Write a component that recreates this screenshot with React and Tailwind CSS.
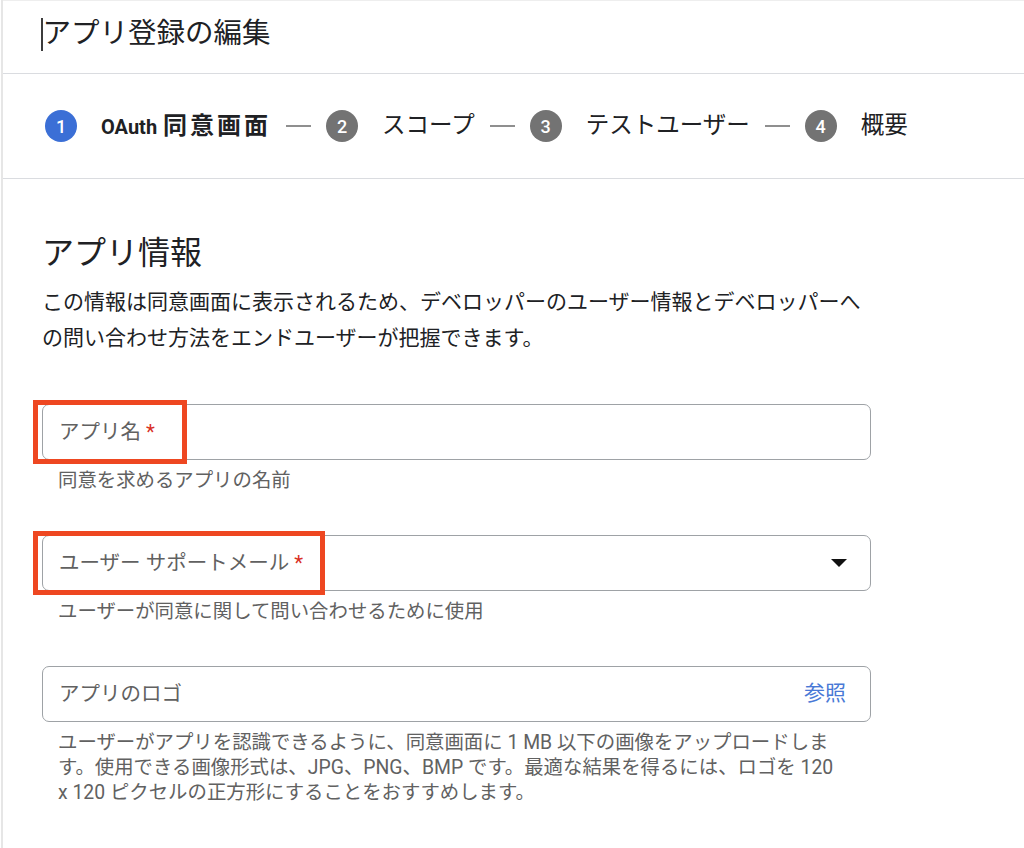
const font = "font-['Roboto','Noto_Sans_CJK_JP',sans-serif]"

function StepCircle({ n, active }) {
  return (
    <div
      className={
        'flex items-center justify-center w-[32px] h-[32px] rounded-full text-white text-[18px] font-medium shrink-0 ' +
        (active ? 'bg-[#3b6fd6]' : 'bg-[#737373]')
      }
    >
      {n}
    </div>
  )
}

function Dash() {
  return <div className="w-[25px] h-[1.5px] bg-[#8f8f8f] mx-[15px] shrink-0" />
}

function Field({ label, required, helper, right, highlight }) {
  return (
    <div className="mb-[42px]">
      <div className="relative flex items-center h-[56px] w-[829px] border border-[#9ea2a6] rounded-[7px] px-[16px]">
        <span className="text-[20.5px] text-[#616161]">
          {label}
          {required && <span className="text-[#d93025] ml-[5px]">*</span>}
        </span>
        <div className="ml-auto">{right}</div>
        {highlight && (
          <div
            className="absolute left-[-10px] top-[-5px] h-[64px] border-[5px] border-[#ee4721]"
            style={{ width: highlight }}
          />
        )}
      </div>
      <p className="mt-[8px] pl-[16px] w-[800px] text-[19.4px] leading-[25px] text-[#616161]">{helper}</p>
    </div>
  )
}

export default function App() {
  return (
    <div className={'w-[1024px] h-[848px] overflow-hidden bg-white ' + font}>
      <div className="ml-[1px] h-full border-l-2 border-[#e6e6e6]">
        {/* header */}
        <div className="h-[74px] border-t border-[#eeeeee] border-b border-b-[#dadce0] pl-[38px] pt-[15px]">
          <div className="flex items-center text-[28.5px] leading-[36px] text-[#202124]">
            <span className="inline-block w-[1.5px] h-[33px] bg-[#3c3c3c]" />
            アプリ登録の編集
          </div>
        </div>

        {/* stepper */}
        <div className="h-[105px] border-b border-[#dadce0] pl-[42px] flex items-center text-[#202124]">
          <StepCircle n="1" active />
          <span className="ml-[24px] font-bold whitespace-nowrap">
            <span className="text-[20px]">OAuth</span>
            <span className="text-[24px] tracking-[3px] ml-[6px]">同意画面</span>
          </span>
          <Dash />
          <StepCircle n="2" />
          <span className="ml-[24px] text-[23.5px]">スコープ</span>
          <Dash />
          <StepCircle n="3" />
          <span className="ml-[24px] text-[23.5px]">テストユーザー</span>
          <Dash />
          <StepCircle n="4" />
          <span className="ml-[24px] text-[23.5px]">概要</span>
        </div>

        {/* content */}
        <div className="pl-[39px]">
          <h2 className="mt-[54px] text-[32px] leading-[40px] text-[#202124]">アプリ情報</h2>
          <p className="mt-[11px] w-[829px] text-[21px] leading-[36px] text-[#202124]">
            この情報は同意画面に表示されるため、デベロッパーのユーザー情報とデベロッパーへの問い合わせ方法をエンドユーザーが把握できます。
          </p>

          <div className="mt-[48px]">
            <Field label="アプリ名" required helper="同意を求めるアプリの名前" highlight={154} />
            <Field
              label="ユーザー サポートメール"
              required
              helper="ユーザーが同意に関して問い合わせるために使用"
              highlight={292}
              right={
                <svg width="16" height="8" viewBox="0 0 16 8" className="mr-[7px]">
                  <path d="M0 0 L16 0 L8 8 Z" fill="#111" />
                </svg>
              }
            />
            <Field
              label="アプリのロゴ"
              helper={
                <span className="block w-[784px]">
                  ユーザーがアプリを認識できるように、同意画面に 1 MB 以下の画像をアップロードします。使用できる画像形式は、JPG、PNG、BMP です。最適な結果を得るには、ロゴを 120 x 120 ピクセルの正方形にすることをおすすめします。
                </span>
              }
              right={<span className="text-[21px] text-[#4979d6] mr-[8px]">参照</span>}
            />
          </div>
        </div>
      </div>
    </div>
  )
}
